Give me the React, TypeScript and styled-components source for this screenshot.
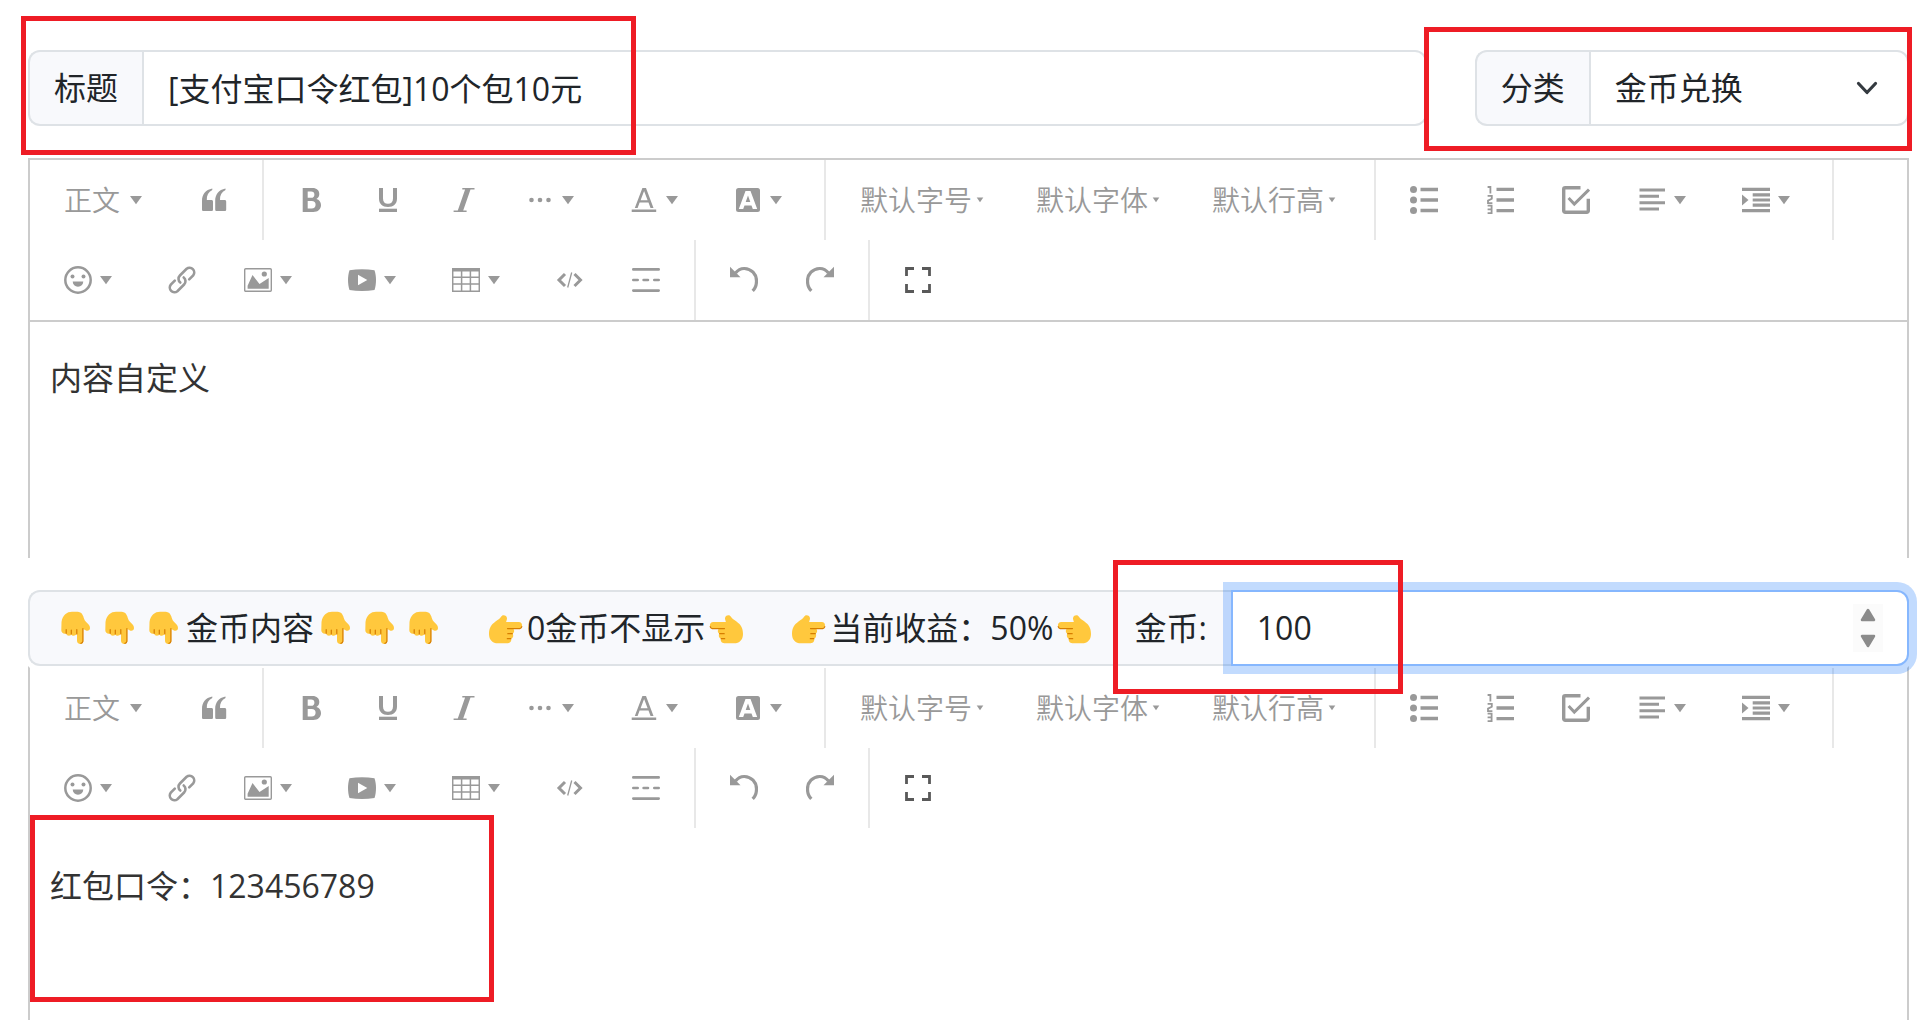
import React from "react";
import styled, { createGlobalStyle } from "styled-components";

const font = '"Open Sans", "Noto Sans CJK SC", sans-serif';

const GlobalStyle = createGlobalStyle`
  *, *::before, *::after { box-sizing: border-box; }
  body {
    margin: 0;
    background: #fff;
    color: #212529;
    font-family: ${font};
    font-size: 32px;
    line-height: 48px;
    overflow: hidden;
  }
  button, input, select, textarea { font: inherit; color: inherit; }
`;

/* ---------- page ---------- */

const Page = styled.main`
  position: relative;
  display: flex;
  flex-direction: column;
  padding: 50px 10px 0 28px;
`;

const HeaderRow = styled.div`
  display: grid;
  grid-template-columns: repeat(12, 1fr);
  column-gap: 48px;
  margin-bottom: 32px;
`;

const InputGroup = styled.div<{ $span?: number }>`
  grid-column: span ${(p) => p.$span ?? 12};
  display: flex;
  height: 76px;
`;

const Addon = styled.label`
  display: flex;
  align-items: center;
  gap: 37px;
  padding: 0 24px;
  white-space: nowrap;
  background: #f8f9fc;
  border: 2px solid #dee2e6;
  border-right: 0;
  border-radius: 12px 0 0 12px;
`;

const Control = styled.div<{ $focused?: boolean }>`
  position: relative;
  flex: 1;
  min-width: 0;
  display: flex;
  align-items: center;
  border: 2px solid ${(p) => (p.$focused ? "#86b7fe" : "#dee2e6")};
  border-radius: 0 12px 12px 0;
  box-shadow: ${(p) => (p.$focused ? "0 0 0 8px rgba(13, 110, 253, 0.25)" : "none")};
  background: #fff;
`;

const TextInput = styled.input`
  flex: 1;
  min-width: 0;
  height: 100%;
  padding: 0 24px 2px;
  border: 0;
  outline: 0;
  background: transparent;
  appearance: textfield;
  &::-webkit-inner-spin-button { appearance: none; }
`;

const Select = styled.select`
  flex: 1;
  height: 100%;
  padding: 0 72px 0 24px;
  border: 0;
  outline: 0;
  background: transparent;
  appearance: none;
`;

const Chevron = styled.svg`
  position: absolute;
  right: 24px;
  width: 32px;
  height: 24px;
  pointer-events: none;
`;

const Spinner = styled.div`
  display: flex;
  flex-direction: column;
  gap: 4px;
  width: 30px;
  height: 48px;
  margin-right: 24px;
  background: #fbfbfb;
`;

const SpinButton = styled.button`
  flex: 1;
  display: flex;
  align-items: center;
  justify-content: center;
  padding: 0;
  border: 0;
  background: transparent;
`;

const AddonText = styled.span`
  display: flex;
  align-items: center;
`;

const Emoji = styled.svg`
  width: 44px;
  height: 34px;
`;

/* ---------- editor ---------- */

const Editor = styled.section<{ $attached?: boolean }>`
  border: 2px solid #ccc;
  border-top-color: ${(p) => (p.$attached ? "transparent" : "#ccc")};
  border-bottom: 0;
  margin-bottom: ${(p) => (p.$attached ? 0 : 32)}px;
`;

const Toolbar = styled.div<{ $line?: boolean }>`
  display: flex;
  flex-wrap: wrap;
  padding: 0 10px;
  border-bottom: 2px solid ${(p) => (p.$line ? "#ccc" : "transparent")};
`;

const Item = styled.div`
  height: 80px;
  padding: 8px;
`;

const ToolButton = styled.button<{ $dark?: boolean; $minWidth?: number }>`
  display: flex;
  align-items: center;
  height: 64px;
  min-width: ${(p) => p.$minWidth ?? 0}px;
  padding: 0 16px;
  border: 0;
  background: transparent;
  color: ${(p) => (p.$dark ? "#595959" : "#999")};
  font-size: 28px;
  font-weight: 350;
  line-height: 40px;
  white-space: nowrap;
`;

const Label = styled.span<{ $pad?: boolean }>`
  padding-right: ${(p) => (p.$pad ? 2 : 0)}px;
`;

const Icon = styled.svg<{ $w?: number }>`
  width: ${(p) => p.$w ?? 28}px;
  height: 28px;
  fill: none;
  stroke: none;
`;

const Divider = styled.div`
  width: 2px;
  height: 80px;
  margin: 0 10px;
  background: #e8e8e8;
`;

const Body = styled.textarea<{ $height: number }>`
  display: block;
  width: 100%;
  height: ${(p) => p.$height}px;
  padding: 32px 20px;
  border: 0;
  outline: 0;
  resize: none;
  background: transparent;
  color: #333;
`;

/* ---------- red annotation frames ---------- */

const Frame = styled.div<{ $top: number; $left?: number; $right?: number; $width: number; $height: number }>`
  position: absolute;
  top: ${(p) => p.$top}px;
  left: ${(p) => (p.$left === undefined ? "auto" : `${p.$left}px`)};
  right: ${(p) => (p.$right === undefined ? "auto" : `${p.$right}px`)};
  width: ${(p) => p.$width}px;
  height: ${(p) => p.$height}px;
  border: 5px solid #ee1c25;
  pointer-events: none;
`;

/* ---------- icons, drawn on a 28 unit grid ---------- */

const c = "currentColor";

const icons: Record<string, React.ReactNode> = {
  quote: (
    <g fill={c}>
      <path d="M12.3 2.6C5.5 4 2 8.500 2 15v8.500c0 1 .6 1.600 1.600 1.600h7.800c1 0 1.600-.6 1.600-1.600v-7.800c0-1-.6-1.600-1.600-1.600H6.800c-.2-4.500 1.600-8 5.500-10z" />
      <path d="M25.500 2.600c-6.800 1.400-10.300 5.900-10.300 12.400v8.500c0 1 .6 1.600 1.600 1.600h7.800c1 0 1.600-.6 1.600-1.600v-7.800c0-1-.6-1.600-1.600-1.600H20c-.2-4.500 1.600-8 5.500-10z" />
    </g>
  ),
  bold: (
    <path
      fill={c}
      fillRule="evenodd"
      d="M4.700 2h9.800c4.300 0 6.800 2.400 6.800 6 0 2.300-1 4-2.900 5 2.900.8 4.600 3 4.600 6 0 4.200-3 7-7.700 7H4.700zM9.700 5.600v6.200h3.400c2.200 0 3.300-1.100 3.300-3.100s-1.100-3.100-3.300-3.100zM9.700 15v7.400h4c2.500 0 3.900-1.300 3.900-3.700S16.200 15 13.700 15z"
    />
  ),
  underline: (
    <g fill={c}>
      <path d="M5 2h4v10.500c0 3.500 1.800 5.300 5 5.300s5-1.800 5-5.300V2h4v10.500c0 5.500-3.400 8.500-9 8.500s-9-3-9-8.500z" />
      <path d="M5 22.700h18V26H5z" />
    </g>
  ),
  italic: <path fill={c} d="M12.300 2h12.200v1.600h-4L13.200 24.400h3.400V26H3.600v-1.600h4.200L15.100 3.600h-2.800z" />,
  more: (
    <g fill={c}>
      <circle cx="5.500" cy="14" r="2.300" />
      <circle cx="14" cy="14" r="2.300" />
      <circle cx="22.500" cy="14" r="2.300" />
    </g>
  ),
  color: (
    <g fill={c}>
      <path d="M1.700 23.500h24.500V26H1.700z" />
      <path fillRule="evenodd" d="M12.400 2h3.600l7.500 20h-3l-2-5.400H9.600l-2 5.400H4.800zM14.100 5l-3.500 9.200h7z" />
    </g>
  ),
  background: (
    <g>
      <rect x="2" y="2" width="24" height="24" rx="2.500" fill={c} />
      <path fill="#fff" fillRule="evenodd" d="M11.500 5h5l6.700 18h-4.400l-1.300-3.600h-7L9.200 23H4.800zM14 9.500l-2.300 6.600h4.600z" />
    </g>
  ),
  bulleted: (
    <g fill={c}>
      <circle cx="3.500" cy="3.500" r="3.500" />
      <circle cx="3.500" cy="14" r="3.500" />
      <circle cx="3.500" cy="24.500" r="3.500" />
      <path d="M10.500 1.700H28v3.600H10.500zM10.500 12.200H28v3.600H10.500zM10.500 22.700H28v3.600H10.500z" />
    </g>
  ),
  numbered: (
    <g>
      <path fill={c} d="M10.500 1.700H28v3.400H10.500zM10.500 12.300H28v3.400H10.500zM10.500 22.900H28v3.400H10.500z" />
      <path stroke={c} strokeWidth="1.800" d="M1.600 1h2.800v6.400M1.600 9.800h4.200v3l-3.800 1.800v2.500h4.400M1.600 19.600h4v7.600h-4M1.600 23.300h4" />
    </g>
  ),
  todo: (
    <g stroke={c} strokeWidth="3.400">
      <path strokeLinejoin="round" d="M18.500 1.700H3.200a1.500 1.500 0 0 0-1.500 1.500v21.600a1.500 1.500 0 0 0 1.500 1.500h21.600a1.500 1.500 0 0 0 1.500-1.500V12.700" />
      <path strokeWidth="3" d="M6.600 12l5.700 6L27 3.600" />
    </g>
  ),
  align: <path stroke={c} strokeWidth="3" d="M1.500 4H27M1.500 10.300H21M1.500 16.700H27M1.500 23H21" />,
  indent: (
    <g>
      <path stroke={c} strokeWidth="3.200" d="M0 3.400h28M10.700 8.900H28M10.700 14H28M10.700 19.200H28M0 24.600h28" />
      <path fill={c} d="M0 8.500l6.500 5.500L0 19.500z" />
    </g>
  ),
  emoji: (
    <g>
      <circle cx="14" cy="14" r="12.700" stroke={c} strokeWidth="2.500" />
      <circle cx="8.500" cy="10.400" r="2" fill={c} />
      <circle cx="19.500" cy="10.400" r="2" fill={c} />
      <path fill={c} d="M8.700 15.600h10.600c-.2 3.200-2.200 5.200-5.300 5.200s-5.100-2-5.300-5.200z" />
    </g>
  ),
  link: (
    <g stroke={c} strokeWidth="2.600" strokeLinecap="round">
      <path d="M21.200 13.400l4-4a4.700 4.700 0 0 0-6.600-6.600l-6.700 6.700a4.700 4.700 0 0 0 .4 7" />
      <path d="M6.800 14.600l-4 4a4.700 4.700 0 0 0 6.600 6.600l6.700-6.700a4.700 4.700 0 0 0-.4-7" />
    </g>
  ),
  image: (
    <g>
      <rect x=".7" y="2.700" width="26.600" height="22.600" rx="1" stroke={c} strokeWidth="1.400" />
      <path fill={c} d="M3.600 22.700v-3L8.500 9l7 9 9.200-6v10.700z" />
      <circle cx="20.300" cy="8" r="2.600" fill={c} />
    </g>
  ),
  video: (
    <path
      fill={c}
      fillRule="evenodd"
      d="M1.500 4.200C9.500 3 18.500 3 26.500 4.200 28.500 10 28.500 18 26.500 24c-8 1.200-17 1.200-25 0-2-6-2-14 0-19.800zM10 8.700v10.600l9.300-5.300z"
    />
  ),
  table: (
    <g>
      <path fill={c} d="M0 2h28v3.500H0z" />
      <path stroke={c} strokeWidth="1.500" d="M.7 3v22.300h26.600V3M9.600 4v21M18.400 4v21M1 11.300h26M1 17.900h26" />
    </g>
  ),
  code: (
    <g stroke={c}>
      <path strokeWidth="3" d="M9 8l-6 6 6 6M18.500 8l6 6-6 6" />
      <path strokeWidth="1.300" d="M15.700 6.500l-4 15" />
    </g>
  ),
  rule: <path stroke={c} strokeWidth="2.600" strokeLinecap="round" d="M1.300 3.400h25.400M1.300 24.600h25.400M1.300 14h4.400M11.600 14H16M22.300 14h4.400" />,
  undo: (
    <g>
      <path fill={c} d="M0 .8v10.500h10.500z" />
      <path stroke={c} strokeWidth="3.200" d="M5.500 7C8 3.800 11 2.400 14.400 2.500c6.900.2 12.100 5.600 12.100 12.400 0 3.900-1.300 7.400-3.800 10" />
    </g>
  ),
  redo: (
    <g>
      <path fill={c} d="M28 .8v10.500H17.500z" />
      <path stroke={c} strokeWidth="3.200" d="M22.500 7C20 3.800 17 2.400 13.600 2.500 6.700 2.700 1.500 8.100 1.500 14.900c0 3.900 1.300 7.400 3.800 10" />
    </g>
  ),
  fullscreen: <path stroke={c} strokeWidth="2.800" d="M10 2.500H2.500V10M18 2.500h7.500V10M10 25.500H2.500V18M18 25.500h7.500V18" />,
};

const Caret = () => (
  <Icon viewBox="0 0 28 28" aria-hidden="true">
    <path fill={c} d="M8 10h12l-6 8.200z" />
  </Icon>
);

const SmallCaret = () => (
  <Icon $w={16} viewBox="0 0 16 28" aria-hidden="true">
    <path fill={c} d="M4.700 11.500h6.600L8 16.300z" />
  </Icon>
);

type Tool = {
  icon?: string;
  text?: string;
  name: string;
  caret?: "large" | "small";
  dark?: boolean;
  minWidth?: number;
};

const groups: Tool[][] = [
  [
    { text: "正文", name: "正文", caret: "large", minWidth: 120 },
    { icon: "quote", name: "引用" },
  ],
  [
    { icon: "bold", name: "粗体" },
    { icon: "underline", name: "下划线" },
    { icon: "italic", name: "斜体" },
    { icon: "more", name: "更多", caret: "large" },
    { icon: "color", name: "文字颜色", caret: "large" },
    { icon: "background", name: "背景色", caret: "large" },
  ],
  [
    { text: "默认字号", name: "默认字号", caret: "small" },
    { text: "默认字体", name: "默认字体", caret: "small" },
    { text: "默认行高", name: "默认行高", caret: "small" },
  ],
  [
    { icon: "bulleted", name: "无序列表" },
    { icon: "numbered", name: "有序列表" },
    { icon: "todo", name: "待办" },
    { icon: "align", name: "对齐", caret: "large" },
    { icon: "indent", name: "缩进", caret: "large" },
  ],
  [
    { icon: "emoji", name: "表情", caret: "large" },
    { icon: "link", name: "插入链接" },
    { icon: "image", name: "图片", caret: "large" },
    { icon: "video", name: "视频", caret: "large" },
    { icon: "table", name: "表格", caret: "large" },
    { icon: "code", name: "代码" },
    { icon: "rule", name: "分割线" },
  ],
  [
    { icon: "undo", name: "撤销" },
    { icon: "redo", name: "重做" },
  ],
  [{ icon: "fullscreen", name: "全屏", dark: true }],
];

const EditorToolbar = ({ line }: { line?: boolean }) => (
  <Toolbar $line={line} role="toolbar">
    {groups.map((group, g) => (
      <React.Fragment key={g}>
        {g > 0 && <Divider />}
        {group.map((tool) => (
          <Item key={tool.name}>
            <ToolButton type="button" $dark={tool.dark} $minWidth={tool.minWidth} aria-label={tool.name}>
              {tool.text && <Label $pad={tool.caret === "large"}>{tool.text}</Label>}
              {tool.icon && (
                <Icon viewBox="0 0 28 28" aria-hidden="true">
                  {icons[tool.icon]}
                </Icon>
              )}
              {tool.caret === "large" && <Caret />}
              {tool.caret === "small" && <SmallCaret />}
            </ToolButton>
          </Item>
        ))}
      </React.Fragment>
    ))}
  </Toolbar>
);

/* ---------- pointing hands ---------- */

const HandDown = () => (
  <Emoji viewBox="0 0 44 34" aria-hidden="true">
    <path
      fill="#ffc83d"
      d="M7.500 11C8.500 4 13 .8 18 .8h5.500c4.300 0 5.700 3.700 6.700 7.200.9 3.200 5.800 5 5.800 9 0 2.800-2.700 3.400-4.500 2.200L29.300 18v11.800c0 4.200-6.300 4.200-6.300 0V22c-.6 3-4.600 3.600-5.700 1.500-1.200 1.900-4.700 1.500-5.100-1-2 .9-4.900-.3-4.900-3.200z"
    />
    <path stroke="#d67d00" strokeWidth="1.200" strokeLinecap="round" fill="none" d="M12.200 18.500v3.800M17.300 19v4M22.800 18.500V23M28.900 17.500v12.800c-.3 1.200-1 1.800-2 2" />
  </Emoji>
);

const HandSide = ({ flip }: { flip?: boolean }) => (
  <Emoji viewBox="0 0 44 34" aria-hidden="true">
    <g transform={flip ? "translate(44 0) scale(-1 1)" : undefined}>
      <path
        fill="#ffc83d"
        d="M6 23c0-6.500 2.500-9.500 6.500-12.500C15.700 8 17 7.500 18.300 5.400c1.400-2.200 5.900-1.200 5.700 2.200-.1 1.500-.8 2.500-.8 3.400h12.600c4.300 0 4.300 6.400 0 6.400h-6c2 1.200 1.700 4.400-.3 5.200 1.300 1.600.8 4.300-1.300 5 .5 2.600-1 4.700-3.600 4.700H15c-5.500 0-9-3.500-9-9.300z"
      />
      <path stroke="#d67d00" strokeWidth="1.200" strokeLinecap="round" fill="none" d="M24.500 17.600h12.300c1.200-.3 1.800-1 2-2M24.800 22.700h4.500M24.300 27.700h3.500" />
    </g>
  </Emoji>
);

const ThreeHands = () => (
  <>
    <HandDown />
    <HandDown />
    <HandDown />
  </>
);

export default function App() {
  return (
    <>
      <GlobalStyle />
      <Page>
        <HeaderRow>
          <InputGroup $span={9}>
            <Addon htmlFor="title">标题</Addon>
            <Control>
              <TextInput id="title" type="text" defaultValue="[支付宝口令红包]10个包10元" />
            </Control>
          </InputGroup>
          <InputGroup $span={3}>
            <Addon htmlFor="category">分类</Addon>
            <Control>
              <Select id="category" defaultValue="gold">
                <option value="gold">金币兑换</option>
              </Select>
              <Chevron viewBox="0 0 32 24" aria-hidden="true">
                <path d="M7.500 7.500L16 16.500l8.500-9" fill="none" stroke="#343a40" strokeWidth="3.200" strokeLinecap="round" strokeLinejoin="round" />
              </Chevron>
            </Control>
          </InputGroup>
        </HeaderRow>

        <Editor>
          <EditorToolbar line />
          <Body $height={236} aria-label="内容" defaultValue="内容自定义" />
        </Editor>

        <InputGroup>
          <Addon htmlFor="coins">
            <AddonText>
              <ThreeHands />
              金币内容
              <ThreeHands />
            </AddonText>
            <AddonText>
              <HandSide />
              0金币不显示
              <HandSide flip />
            </AddonText>
            <AddonText>
              <HandSide />
              当前收益：50%
              <HandSide flip />
            </AddonText>
            <AddonText>金币:</AddonText>
          </Addon>
          <Control $focused>
            <TextInput id="coins" type="number" defaultValue={100} />
            <Spinner>
              <SpinButton type="button" aria-label="增加">
                <svg width="16" height="14" viewBox="0 0 16 14" aria-hidden="true">
                  <path d="M8 2l6 10H2z" fill="#8b8b8b" stroke="#8b8b8b" strokeWidth="2.500" strokeLinejoin="round" />
                </svg>
              </SpinButton>
              <SpinButton type="button" aria-label="减少">
                <svg width="16" height="14" viewBox="0 0 16 14" aria-hidden="true">
                  <path d="M2 2h12L8 12z" fill="#8b8b8b" stroke="#8b8b8b" strokeWidth="2.500" strokeLinejoin="round" />
                </svg>
              </SpinButton>
            </Spinner>
          </Control>
        </InputGroup>

        <Editor $attached>
          <EditorToolbar />
          <Body $height={190} aria-label="金币内容" defaultValue="红包口令：123456789" />
        </Editor>

        <Frame $top={16} $left={21} $width={615} $height={139} />
        <Frame $top={27} $right={7} $width={488} $height={124} />
        <Frame $top={560} $left={1113} $width={290} $height={134} />
        <Frame $top={815} $left={30} $width={464} $height={187} />
      </Page>
    </>
  );
}
